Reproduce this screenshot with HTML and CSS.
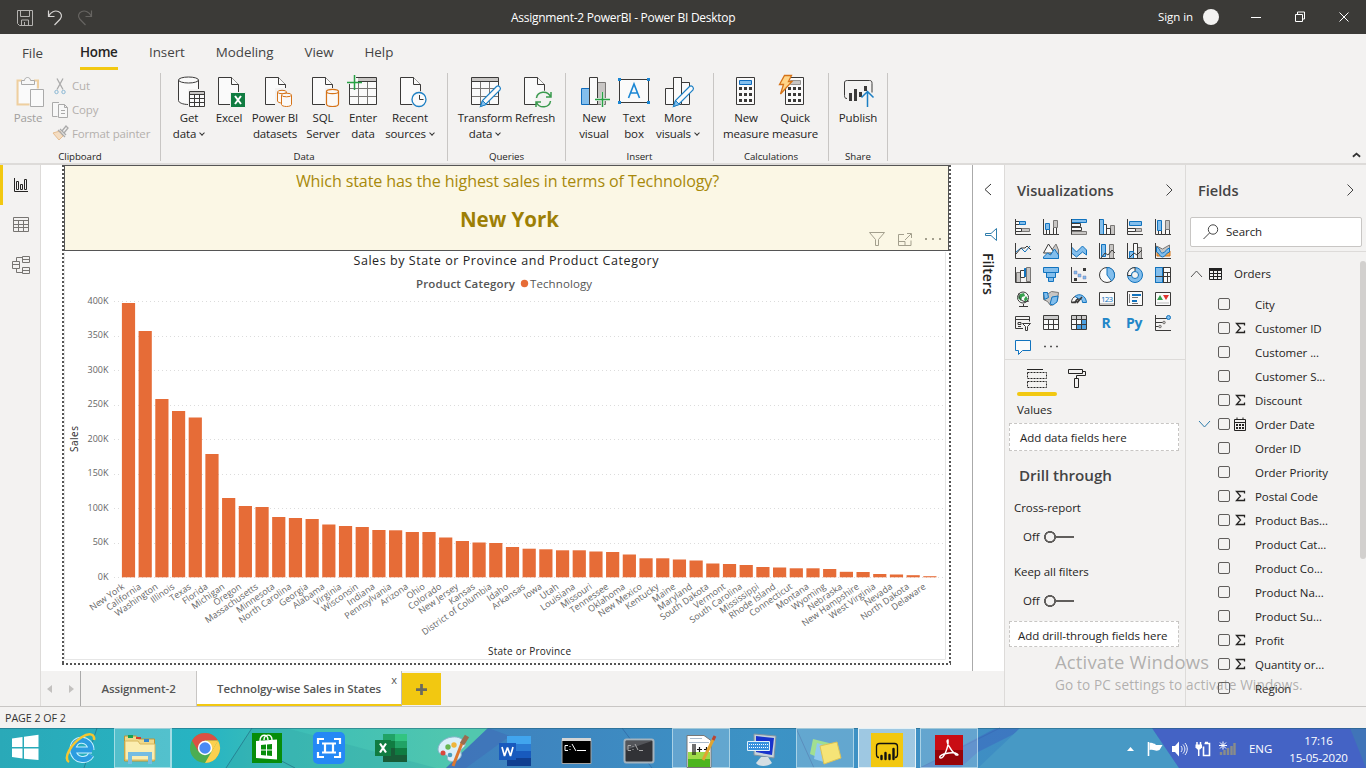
FILE: index.html
```html
<!DOCTYPE html>
<html lang="en">
<head>
<meta charset="utf-8">
<title>Assignment-2 PowerBI - Power BI Desktop</title>
<link rel="stylesheet" href="styles.css">
</head>
<body>
<header class="titlebar">
  <svg class="quick" viewBox="0 0 110 34" fill="none">
    <g stroke="#b5b3b1"><path d="M17.500 10.500h15v15h-13l-2-2zM20.500 10.500v6h9v-6M21.500 25v-5h7v5M24.500 22v3"/></g>
    <path stroke="#d6d4d2" stroke-width="1.200" d="M48.500 10.500v6h6M48.800 16c2-4 6-6 9.500-4.500s4 5 2 7.500L54.500 25"/>
    <path stroke="#666461" stroke-width="1.200" d="M91.500 10.500v6h-6M91.200 16c-2-4-6-6-9.500-4.500s-4 5-2 7.500L85.500 25"/>
  </svg>
  <div class="app-title">Assignment-2 PowerBI - Power BI Desktop</div>
  <div class="account"><span>Sign in</span><i class="avatar"></i></div>
  <svg class="window-btns" viewBox="1240 0 126 34" fill="none" stroke="#fff" stroke-width="1"><path d="M1251 17.500h10M1295.500 14.500h7v7h-7zM1297.500 14v-2h7v7h-2M1339.500 12.500l9 9M1348.500 12.500l-9 9"/></svg>
</header>
<nav class="menu"><span class="m-file">File</span><span class="active">Home</span><span>Insert</span><span>Modeling</span><span>View</span><span>Help</span></nav>
<section class="ribbon">
  <div class="group g-clip">
    <div class="clip">
      <div class="btn off"><svg class="ico" viewBox="12 76 32 32"><g fill="none"><path d="M22 80.500h-4.500v24h12M34 80.500h4v8" stroke="#efcf9f" stroke-width="2"/><path fill="#fafafa" d="M19 82h17v7h-6v14H19z"/><path stroke="#aaa" fill="#f7f7f7" d="M21.500 84.500v-4h3c0-4 6-4 6 0h4v4z"/><path stroke="#aaa" fill="#fafafa" d="M30.500 89.500h13v17h-13z"/></g></svg><span>Paste</span></div>
      <div class="clip-list">
        <div><svg viewBox="52 77 16 16" fill="none" stroke="#aaa"><path d="M57 77.500l6 11M63 77.500l-6 11" stroke-width="1.300"/><circle cx="56.500" cy="91" r="1.700" stroke="#8bb8d5"/><circle cx="63.500" cy="91" r="1.700" stroke="#8bb8d5"/></svg><span>Cut</span></div>
        <div><svg viewBox="52 101 16 16" fill="#f7f7f7" stroke="#aaa"><path d="M59 101.500h-6.500v14h5M58.500 103.500h6l3 3v10h-9zM64.500 103.500v3h3M61 109.500h4M61 112.500h4"/></svg><span>Copy</span></div>
        <div><svg viewBox="52 125 16 16" fill="none" stroke="#aaa"><path d="M53 132l6 7 4-4-3-5z" fill="#f4ddc2" stroke="#e6be91"/><path d="M58 129l7 7M60 128l6 6M62 130l4-5 2 2-4 5" stroke-width="1.300"/></svg><span>Format painter</span></div>
      </div>
    </div>
    <div class="gname">Clipboard</div>
  </div>
  <div class="group g-data">
    <div class="btns">
      <div class="btn"><svg class="ico" viewBox="173 76 32 32"><path class="w" d="M178.500 80v20.500c0 2 4 4 10 4s10-2 10-4V80"/><ellipse class="w" cx="188.500" cy="80" rx="10" ry="3"/><path fill="#f3f2f1" d="M188 89h18v18h-18z"/><path class="w" d="M189.500 91.500h15v15h-15z"/><path fill="#c8c6c4" d="M190 92h14v2h-14z"/><path class="k" d="M189.500 94.500h15M189.500 98.500h15M189.500 102.500h15M194.500 94v12M199.500 94v12"/></svg><span>Get<br>data<i class="dd"></i></span></div>
      <div class="btn"><svg class="ico" viewBox="213 76 32 32"><path class="w" d="M218.500 77.500h13l7 7v20h-20z"/><path class="w" d="M231.500 77.500v7h7"/><path fill="#107c41" stroke="#f3f2f1" d="M230.500 92.500h15v15h-15z"/><path stroke="#fff" stroke-width="2" d="M235 96l6 8M241 96l-6 8"/></svg><span>Excel</span></div>
      <div class="btn"><svg class="ico" viewBox="259 76 32 32"><path class="w" d="M265.500 77.500h13l7 7v20h-20z"/><path class="w" d="M278.500 77.500v7h7"/><path fill="#f3f2f1" d="M275 88h13v20h-13z"/><g fill="#fbf9f7" stroke="#d67318"><path d="M277.500 92v9c0 1 2 2 4.500 2s4.500-1 4.500-2v-9"/><ellipse cx="282" cy="92" rx="4.500" ry="1.700"/><path d="M281.500 95v9.500c0 1 2 2 5 2s5-1 5-2V95"/><ellipse cx="286.500" cy="95" rx="5" ry="1.800"/></g></svg><span>Power BI<br>datasets</span></div>
      <div class="btn"><svg class="ico" viewBox="307 76 32 32"><path class="w" d="M312.500 77.500h13l7 7v20h-20z"/><path class="w" d="M325.500 77.500v7h7"/><path fill="#f3f2f1" d="M325 88h14v20h-14z"/><g fill="#fbf9f7" stroke="#d67318" stroke-width="1.200"><path d="M326.500 91.500v12.500c0 1.500 3 2.500 6 2.500s6-1 6-2.500V91.500"/><ellipse cx="332.500" cy="91.500" rx="6" ry="2.200"/></g></svg><span>SQL<br>Server</span></div>
      <div class="btn"><svg class="ico" viewBox="347 76 32 32"><path class="w" d="M349.500 77.500h27v27h-27z"/><path fill="#c8c6c4" d="M358 78h18v3h-18z"/><path stroke="#797775" fill="none" d="M350 88.500h26M350 96.500h26M358.500 83v21M367.500 81v23"/><path class="k" d="M358 81.500h18"/><path fill="#f3f2f1" d="M346 75h10v9h-10z"/><path stroke="#27a144" stroke-width="1.500" d="M347 82.500h15M354.500 75v15"/></svg><span>Enter<br>data</span></div>
      <div class="btn"><svg class="ico" viewBox="394 76 32 32"><path class="w" d="M400.500 77.500h13l7 7v20h-20z"/><path class="w" d="M413.500 77.500v7h7"/><circle cx="419" cy="99.500" r="8.500" fill="#f3f2f1"/><circle cx="419" cy="99.500" r="7" fill="#fafafa" stroke="#1b7fc4" stroke-width="1.300"/><path class="k" d="M419.500 95v4.500h4"/></svg><span>Recent<br>sources<i class="dd"></i></span></div>
    </div>
    <div class="gname">Data</div>
  </div>
  <div class="group g-query">
    <div class="btns">
      <div class="btn"><svg class="ico" viewBox="469 76 32 32"><path class="w" d="M471.500 77.500h27v27h-27z"/><path fill="#c8c6c4" d="M472 78h26v3h-26z"/><path stroke="#797775" fill="none" d="M472 88.500h26M472 96.500h26M480.500 82v22M489.500 82v22"/><path class="k" d="M472 81.500h26"/><path class="pen" d="M480.500 106.500l2-6 14-14c2-2 5 1 3.500 3.500l-14 14z"/><path fill="#83beec" stroke="#1b7fc4" d="M480.500 106.500l2-6 4 4z"/></svg><span>Transform<br>data<i class="dd"></i></span></div>
      <div class="btn"><svg class="ico" viewBox="519 76 32 32"><path class="w" d="M524.500 77.500h13l7 7v20h-20z"/><path class="w" d="M537.500 77.500v7h7"/><circle cx="543.500" cy="99.500" r="9" fill="#f3f2f1"/><path stroke="#3a9a4e" stroke-width="1.500" fill="none" d="M536.500 98c1-7 11-8 14-1.500M551 92v5h-5M550.500 101c-1 7-11 8-14 1.500M536 107v-5h5"/></svg><span>Refresh</span></div>
    </div>
    <div class="gname">Queries</div>
  </div>
  <div class="group g-insert">
    <div class="btns">
      <div class="btn"><svg class="ico" viewBox="578 76 32 32"><path fill="#83beec" stroke="#0f6cbd" d="M581.500 88.500h8v16h-8z"/><path fill="#c8c6c4" stroke="#797775" d="M597.500 82.500h8v22h-8z"/><path class="w" d="M589.500 77.500h8v27h-8z"/><path stroke="#f3f2f1" stroke-width="3" d="M596 99.500h14M602.500 92v15"/><path stroke="#27a144" stroke-width="1.500" d="M595 99.500h15M602.500 92v15"/></svg><span>New<br>visual</span></div>
      <div class="btn"><svg class="ico" viewBox="618 76 32 32"><path class="w" d="M619.500 79.500h29v23h-29z"/><path fill="#1b87d4" d="M618 78h3v3h-3zM647 78h3v3h-3zM618 101h3v3h-3zM647 101h3v3h-3z"/><path stroke="#1b87d4" stroke-width="1.600" fill="none" d="M628.500 98l5.500-14 5.500 14M630.500 93h7"/></svg><span>Text<br>box</span></div>
      <div class="btn"><svg class="ico" viewBox="663 76 32 32"><path class="w" d="M666.500 88.500h8v16h-8zM682.500 82.500h8v22h-8z"/><path class="w" d="M674.500 77.500h8v27h-8z"/><path class="pen" d="M674.500 106.500l2-6 14-14c2-2 5 1 3.500 3.500l-14 14z"/><path fill="#83beec" stroke="#1b7fc4" d="M674.500 106.500l2-6 4 4z"/></svg><span>More<br>visuals<i class="dd"></i></span></div>
    </div>
    <div class="gname">Insert</div>
  </div>
  <div class="group g-calc">
    <div class="btns">
      <div class="btn"><svg class="ico" viewBox="730 76 32 32"><path class="w" d="M736.500 77.500h18v27h-18z"/><path fill="#83beec" stroke="#0f6cbd" d="M739.500 80.500h12v4h-12z"/><path stroke="#3b3a39" stroke-width="3" stroke-dasharray="3 2" d="M739 88.500h13M739 94.500h13M739 100.500h13"/></svg><span>New<br>measure</span></div>
      <div class="btn"><svg class="ico" viewBox="779 76 32 32"><path class="w" d="M785.500 77.500h18v27h-18z"/><path fill="#c8c6c4" stroke="#979593" d="M790.500 80.500h10v4h-10z"/><path stroke="#3b3a39" stroke-width="3" stroke-dasharray="3 2" d="M788 88.500h13M788 94.500h13M788 100.500h13"/><path fill="#ffd588" stroke="#d67318" stroke-width="1.300" d="M784.500 75.500h7l-3 6h3.500L780.500 94l3-9.500h-4z"/></svg><span>Quick<br>measure</span></div>
    </div>
    <div class="gname">Calculations</div>
  </div>
  <div class="group g-share">
    <div class="btns">
      <div class="btn"><svg class="ico" viewBox="842 76 32 32"><path class="k" d="M847 98.500c-2 0-2.500-1-2.500-3V83c0-2 1-2.500 3-2.500h22c2 0 2.500 1 2.500 3v9"/><path stroke="#3b3a39" stroke-width="3" d="M850.500 93v8M855.500 89v12M860.500 92v5M865.500 86v5"/><path stroke="#1b7fc4" stroke-width="1.500" fill="none" d="M867.500 107V91.500M861.500 97.500l6-6 6 6"/></svg><span>Publish</span></div>
    </div>
    <div class="gname">Share</div>
  </div>
  <svg class="collapse" viewBox="0 0 10 6"><path d="M1 5l4-3.500L9 5" fill="none" stroke="#333" stroke-width="2"/></svg>
</section>
<main class="work">
  <aside class="rail">
    <svg viewBox="0 165 40 120" fill="none" stroke="#252423"><path d="M14.500 178v13.500H28M16.500 181.500h2v8h-2zM20.500 184.500h2v5h-2zM24.500 179.500h2v10h-2z"/><g stroke="#777572"><path d="M13.500 217.500h15v14h-15zM13 220.500h16M13 224.500h16M13 227.500h16M18.500 220v12M23.500 220v12"/><path d="M12.500 261.500h7v7h-7zM12.500 264.500h7M22.500 256.500h7v6h-7zM22.500 259.500h7M22.500 267.500h7v6h-7zM22.500 270.500h7M16.500 261v-3.500h6M16.500 269v3.500h6"/></g></svg>
  </aside>
  <div class="center">
    <div class="stage">
      <div class="canvas">
        <div class="page">
          <div class="card">
            <div class="question">Which state has the highest sales in terms of Technology?</div>
            <div class="answer">New York</div>
            <svg class="card-tools" viewBox="868 231 74 16" fill="none" stroke="#a39f8d"><path d="M869.500 232.500h15l-6 7v6h-3v-6zM904 234.500h-5.500v11h12.500v-5M899 241.500h6v4M905 240l6-6M907 233.500h4.500v4.500"/><path stroke-width="2" d="M925 239h2M932 239h2M939 239h2"/></svg>
          </div>
          <svg class="chart" id="chart" viewBox="64 251 885 411"></svg>
        </div>
      </div>
      <aside class="filters">
        <svg viewBox="973 165 31 80" fill="none" stroke="#333"><path d="M991 184l-6 5.500 6 5.500"/><path stroke="#2f7dab" d="M996.500 228.500v12l-5.500-5h-5.500v-2h5.500z"/></svg>
        <div class="vtext">Filters</div>
      </aside>
    </div>
    <div class="pagetabs">
      <div class="arrows"><i class="l"></i><i class="r"></i></div>
      <div class="tab">Assignment-2</div>
      <div class="tab on">Technolgy-wise Sales in States<b>x</b></div>
      <div class="add"><svg viewBox="0 0 12 12"><path d="M6 0v12M0 6h12" stroke="#6b6a5e" stroke-width="3"/></svg></div>
    </div>
  </div>
  <aside class="viz">
    <div class="phead"><span>Visualizations</span><svg viewBox="0 0 8 12"><path d="M1.500 .5L7 6l-5.500 5.500" fill="none" stroke="#444"/></svg></div>
    <div class="vgrid">
      <svg viewBox="0 0 16 16"><path class="k" d="M.5 0v15.500H16"/><path class="g" d="M6.500 9.500h8v3h-8z"/><path class="w" d="M.5 9.500h6v3h-6zM.5 2.500h4v3h-4z"/><path class="b" d="M4.500 2.500h6v3h-6z"/></svg>
      <svg viewBox="0 0 16 16"><path class="k" d="M.5 0v15.500H16"/><path class="w" d="M3.500 10.500h3v5h-3zM10.500 8.500h3v7h-3z"/><path class="b" d="M2.500 4.500h4v6h-4z"/><path class="g" d="M10.500 1.500h4v7h-4z"/></svg>
      <svg viewBox="0 0 16 16"><path class="g" d="M.5 12.500h15v3H.5z"/><path class="w" d="M.5 4.500h9v3h-9zM.5 8.500h10v3H.5z"/><path class="b" d="M.5 .5h15v3H.5z"/><path class="k" d="M.5 0v15.500"/></svg>
      <svg viewBox="0 0 16 16"><path class="g" d="M11.500 6.500h4v9h-4z"/><path class="w" d="M4.500 5.500h3v10h-3zM7.500 9.500h4v6h-4z"/><path class="b" d="M.5 .5h4v15h-4z"/><path class="k" d="M.5 0v15.500H16"/></svg>
      <svg viewBox="0 0 16 16"><path class="k" d="M.5 0v15.500H16"/><path class="g" d="M8.500 9.500h6v3h-6z"/><path class="w" d="M.5 9.500h8v3h-8z"/><path class="b" d="M2.500 2.500h12v4h-12z"/></svg>
      <svg viewBox="0 0 16 16"><path class="k" d="M.5 0v15.500H16"/><path class="w" d="M3.500 10.500h3v5h-3zM10.500 8.500h4v7h-4z"/><path class="b" d="M2.500 1.500h4v10h-4z"/><path class="g" d="M10.500 1.500h4v9h-4z"/></svg>

      <svg viewBox="0 0 16 16"><path class="k" d="M.5 0v15.500H16"/><path fill="none" stroke="#1173be" d="M1 9l5-4 4 4 5-6"/><path class="k" d="M1 11l5-6 4 0 2-2 4 4" /></svg>
      <svg viewBox="0 0 16 16"><path class="g" d="M8 8l5-7 2.500 6v8.500H8z"/><path class="w" d="M.5 10l5-9 6 9z"/><path class="b" d="M.5 15.500V14l4-4 3 2 4-6 4 6v3.500z"/></svg>
      <svg viewBox="0 0 16 16"><path class="b" d="M.5 4l5 5 6-6 4 4v5l-4-3-6 5-5-4z"/><path class="k" d="M.5 0v15.500H16"/></svg>
      <svg viewBox="0 0 16 16"><path class="g" d="M10.500 1.500h4v14h-4z"/><path class="b" d="M2.500 1.500h4v12h-4z"/><path class="k" d="M.5 0v15.500H16M2 15l4-5 3 2 4-5 3 3"/></svg>
      <svg viewBox="0 0 16 16"><path class="g" d="M10.500 4.500h4v11h-4z"/><path class="w" d="M6.500 .5h4v15h-4z"/><path class="b" d="M2.500 8.500h4v7h-4z"/><path class="k" d="M.5 0v15.500H16M3 14l4-4 3 2 5-5"/></svg>
      <svg viewBox="0 0 16 16"><path fill="#f2a84d" stroke="#d67318" d="M2 8h13v5H2z"/><path class="g" d="M1.500 3l6 3 7-4v4l-7 5-6-3z"/><path class="b" d="M1.500 4c4 1 3 6 6 6s3-4 7-5v4c-4 1-4 5-7 5s-3-4-6-5z"/><path class="k" d="M.5 0v15.500H16"/></svg>

      <svg viewBox="0 0 16 16"><path class="g" d="M1.500 5.500h4v10h-4z"/><path class="w" d="M5.500 3.500h4v7h-4z"/><path fill="#1173be" stroke="#1173be" d="M9.500 1.500h2v8h-2z"/><path class="g" d="M11.500 .5h4v14h-4z"/><path class="k" d="M.5 0v15.500H16"/></svg>
      <svg viewBox="0 0 16 16"><path class="b" d="M.5 .5h15v5H.5zM3.500 5.500h9v5h-9zM5.500 10.500h5v4h-5z"/></svg>
      <svg viewBox="0 0 16 16"><path class="k" d="M.5 0v15.500H16"/><path fill="#83beec" stroke="#66a" stroke-width=".4" d="M3 4h3v3H3zM7 7h3v3H7zM12 9h3v3h-3z"/><path fill="#3b3a39" d="M12 1h3v3h-3zM3 11h3v3H3z"/></svg>
      <svg viewBox="0 0 16 16"><circle class="w" cx="8" cy="8" r="7.500"/><path class="b" d="M8 .5A7.500 7.500 0 0 1 12.500 14L8 8z"/></svg>
      <svg viewBox="0 0 16 16"><circle class="b" cx="8" cy="8" r="7.500"/><path class="w" d="M8 .5v4a4 4 0 0 0-3.500 4h-4a7.500 7.500 0 0 1 7.500-8z"/><circle fill="#f3f2f1" stroke="#1173be" cx="8" cy="8" r="3.500"/></svg>
      <svg viewBox="0 0 16 16"><path class="w" d="M.5 .5h15v15H.5z"/><path class="b" d="M.5 .5h7v15h-7z"/><path class="k" d="M.5 9.500h15M8.500 .5v15M8 5.500h7M12.500 5.500v10"/></svg>

      <svg viewBox="0 0 16 16"><circle class="w" cx="8" cy="6.500" r="5.500"/><path fill="#36a04d" d="M5 3l4-1 1 3-3 1-1 4-3-3zM11 5l2 3-3 3-1-3z"/><path class="k" d="M4 2a7 7 0 0 0 10 8M8.500 13v2M4 15.500h9"/></svg>
      <svg viewBox="0 0 16 16"><path class="g" d="M.5 1.500l5 1 3-2 7 1-1 8-4 4-3 1-3-4-4-2z"/><path class="b" d="M.5 1.500h4l1 5-4 2zM9 6l6-1-1 6-4 3-3-1z"/></svg>
      <svg viewBox="0 0 16 16"><path class="w" d="M.5 11.500A7 7 0 0 1 5 5l3 5z"/><path class="b" d="M4 5.500c4-4 11-1 11.500 6h-4c0-3-2-4-4-4z"/><path class="k" d="M.5 11.500h4c0-2 1-3 3-3.500M6 12l5-6" stroke-width="1.500"/></svg>
      <svg viewBox="0 0 16 16"><path class="w" d="M.5 1.500h15v13H.5z"/><path fill="#c8c6c4" d="M1 12h14v2H1z"/><text x="2" y="11" font-size="8" fill="#1173be" textLength="12">123</text></svg>
      <svg viewBox="0 0 16 16"><path class="w" d="M.5 .5h15v14H.5z"/><path stroke="#1173be" stroke-width="2" d="M5 4h9M5 10h5"/><path class="k" d="M2.500 3v9M5 6.500h6M5 12.500h6" stroke-width=".7"/></svg>
      <svg viewBox="0 0 16 16"><path class="w" d="M.5 1.500h15v13H.5z"/><path fill="#36a04d" d="M2 9l3-5 3 5z"/><path fill="#e0352f" d="M8 4h6l-3 5z"/><path stroke="#bbb" d="M2 12h12"/></svg>

      <svg viewBox="0 0 16 16"><path class="k" d="M8 13.500H.5v-12h14v5M.5 4.500h14M3 7.500h3v2H3zM3 11.500h3"/><path class="w" d="M7.500 8.500h8l-3 3v4h-2v-4z"/></svg>
      <svg viewBox="0 0 16 16"><path class="w" d="M.5 .5h15v14H.5z"/><path fill="#ccc" d="M1 1h14v3H1z"/><path class="k" d="M.5 4.500h15M.5 9.500h15M5.500 4v10M10.500 4v10"/></svg>
      <svg viewBox="0 0 16 16"><path class="w" d="M.5 .5h15v14H.5z"/><path fill="#ccc" d="M1 1h14v3H1z"/><path fill="#4a9fe0" d="M10 4h5v10h-5zM5 9h5v5H5z"/><path class="k" d="M.5 4.500h15M.5 9.500h15M5.500 1v13M10.500 1v13"/></svg>
      <div class="rp">R</div>
      <div class="rp">Py</div>
      <svg viewBox="0 0 16 16"><path class="k" d="M.5 0v15.500H16M0 3.500h12M0 7.500h8M0 11.500h4"/><circle class="b" cx="13.500" cy="2.500" r="2"/><circle class="g" cx="9" cy="7.500" r="1.300"/><circle class="g" cx="5" cy="11.500" r="1.300"/></svg>

      <svg viewBox="0 0 16 16"><path fill="#fafafa" stroke="#1173be" d="M.5 1.500h15v10h-8l-4 4v-4h-3z"/></svg>
      <svg viewBox="0 0 16 16"><path stroke="#555" stroke-width="1.600" d="M1 7.500h2M7 7.500h2M13 7.500h2"/></svg>
    </div>
    <div class="vtabs"><svg viewBox="1017 365 80 25" fill="none" stroke="#252423"><path d="M1027 368.500h16"/><path stroke-dasharray="2 1" d="M1027.500 371.500h19v6h-19zM1027.500 380.500h19v6h-19z"/><path d="M1068.500 368.500h14v4h-14zM1083 370.500h2.500v4h-9v3M1074.500 377.500h4v9h-4z"/></svg><i></i></div>
    <div class="values">Values</div>
    <div class="drop">Add data fields here</div>
    <h2>Drill through</h2>
    <div class="opt">Cross-report</div>
    <div class="toggle">Off<i></i></div>
    <div class="opt o2">Keep all filters</div>
    <div class="toggle">Off<i></i></div>
    <div class="drop d2">Add drill-through fields here</div>
  </aside>
  <aside class="fields">
    <div class="phead"><span>Fields</span><svg viewBox="0 0 8 12"><path d="M1.500 .5L7 6l-5.500 5.500" fill="none" stroke="#444"/></svg></div>
    <div class="search"><svg viewBox="0 0 16 16" fill="none" stroke="#444"><circle cx="10" cy="5.500" r="4.700"/><path d="M6.500 9L.5 15"/></svg>Search</div>
    <div class="flist">
      <div class="orders"><svg viewBox="0 0 34 14" fill="none"><path d="M1 10l5.500-6L12 10" stroke="#555"/><path stroke="#222" d="M19.500 1.500h12v11h-12zM19 6.500h13M19 9.500h13M23.500 3v10M27.500 3v10"/><path stroke="#222" stroke-width="3" d="M19 2.500h13"/></svg>Orders</div>
      <div id="fieldrows"></div>
      <i class="scroll"></i>
    </div>
  </aside>
  <div class="watermark"><p class="wm1">Activate Windows</p><p class="wm2">Go to PC settings to activate Windows.</p></div>
</main>
<div class="status">PAGE 2 OF 2</div>
<footer class="taskbar">
  <svg class="wall" viewBox="0 728 1366 40" preserveAspectRatio="none">
    <defs><linearGradient id="wg"><stop offset="0" stop-color="#2aa9b8"/><stop offset=".15" stop-color="#27b4c3"/><stop offset=".2" stop-color="#3abdb8"/><stop offset=".34" stop-color="#52c7ae"/></linearGradient><linearGradient id="wb"><stop offset="0" stop-color="#3f80bd"/><stop offset=".35" stop-color="#3c93c5"/><stop offset="1" stop-color="#4385c0"/></linearGradient></defs>
    <path fill="url(#wg)" d="M0 728h1366v40H0z"/><path fill="#35a5a6" d="M252 728h34l150 40H226z" opacity=".35"/>
    <path fill="url(#wb)" d="M488 728h878v40H446z"/><path fill="#3f69b5" d="M488 728l-42 40h20l44-32z" opacity=".5"/>
    <path fill="none" stroke="#236f84" opacity=".7" d="M97 728L84 768M252 728l-26 40M270 755l25 13"/>
    <path fill="none" stroke="#2d5e9c" opacity=".6" d="M622 728l30 40M796 728l18 40M1000 728l-80 40"/>
    <path fill="#3c6bc0" d="M978 752l48-24h-30l-76 40h40z" opacity=".6"/>
    <path fill="#4799c5" d="M1020 728h132l27 40H978z"/><path fill="#4463c5" d="M1152 728h214v40h-187z"/><path fill="#4074b8" d="M1350 728h16v40z"/>
    <path fill="#1f5f77" opacity=".5" d="M0 728h1366v1H0z"/>
  </svg>
  <div class="start"><svg viewBox="11 735 28 26" fill="#fff"><path d="M12 738.500l10.500-1.500v10H12zM24 736.800l14.500-2v12.200H24zM12 748.500h10.500v10L12 757zM24 748.500h14.500V760L24 758.700z"/></svg></div>
  <div class="apps">
    <div><svg viewBox="65 732 32 32"><path fill="none" stroke="#c4f0ff" stroke-width="7" d="M92 750H73c0-14 18-12 18 0M91 755c-4 7-16 6-18-4"/><path fill="none" stroke="#2b9ce0" stroke-width="5" d="M92 750H73c0-14 18-12 18 0M91 755c-4 7-16 6-18-4"/><path fill="none" stroke="#f5c731" stroke-width="2.500" d="M69 762c-6-4 2-18 13-25 6-4 13-4 12 3"/></svg></div>
    <div class="open stack"><svg viewBox="124 732 32 32"><path fill="#eed88b" stroke="#b99537" d="M124.500 736h12l2 3h16v22h-30z"/><path fill="#15a052" d="M128 735h5v3h-5z"/><path fill="#d43c2c" d="M136 737h5v2h-5z"/><path fill="#3285cc" d="M144 739h5v3h-5z"/><path fill="#fbedb0" stroke="#d8b85d" d="M125 741h13l2 3h15v16h-30z"/><path fill="none" stroke="#75bce2" stroke-width="4" d="M130 764v-10h20v10"/></svg></div>
    <div><svg viewBox="189 732 32 32"><circle cx="205" cy="748" r="15" fill="#4cad51"/><path fill="#dc5044" d="M192 740.500a15 15 0 0 1 26 0h-13l-6.500 11.200z"/><path fill="#fcd04f" d="M218 740.500a15 15 0 0 1-13 22.500l6.500-11.200z"/><path fill="#fcd04f" d="M205 740.500h13.100l-6.600 11.500z"/><circle cx="205" cy="748" r="7.200" fill="#fff"/><circle cx="205" cy="748" r="5.700" fill="#4a8af4"/></svg></div>
    <div><svg viewBox="251 732 32 32"><path fill="#078d0a" d="M252 733h30v30h-30z"/><path fill="#fff" d="M256 741l21-1.500v20L256 758z"/><path fill="none" stroke="#fff" stroke-width="1.400" d="M260 741c0-7 8-8 8-1M264 740c0-6 8-7 8 0"/><path fill="#078d0a" d="M261 745l5-.500v5h-5zM267 744.400l5-.500v5.600h-5zM261 750.500h5v5l-5-.500zM267 750.500h5v5.500l-5-.400z"/></svg></div>
    <div><svg viewBox="313 732 32 32"><rect x="313" y="732" width="32" height="32" rx="5" fill="#2588f5"/><path fill="none" stroke="#fff" stroke-width="2.200" d="M318 744v-5h6M334 739h6v5M340 752v5h-6M324 757h-6v-5M322 743.500h14M322 752.500h14M325 743v10M333 743v10"/></svg></div>
    <div><svg viewBox="375 732 32 32"><path fill="#21a366" d="M383 734h24v28h-24z"/><path fill="#107c41" d="M383 741h12v7h-12z"/><path fill="#33c481" d="M395 734h12v7h-12z"/><path fill="#185c37" d="M383 748h12v7h12v7h-24z"/><path fill="#107c41" d="M395 748h12v7h-12zM375 740h16v16h-16z"/><path stroke="#fff" stroke-width="2.200" d="M380 743.500l6 9M386 743.500l-6 9"/></svg></div>
    <div><svg viewBox="437 732 32 32"><path fill="#d9effa" stroke="#8bb4cc" d="M438 749c1-12 22-17 27-6 2 5-6 5-4 10s-6 10-12 8c-3-2 0-5-3-6s-8 0-8-6z"/><circle cx="443" cy="753" r="2.500" fill="#d8493d"/><circle cx="448" cy="747" r="2.700" fill="#66b653"/><circle cx="454" cy="745" r="2.700" fill="#eeb53c"/><circle cx="450" cy="755" r="2.300" fill="#4b9ebd"/><path stroke="#dc7730" stroke-width="3" d="M453 766l9-23"/><path stroke="#9b6c4f" stroke-width="5" d="M462 744l5-8"/></svg></div>
    <div><svg viewBox="499 732 32 32"><path fill="#41a5ee" d="M507 736h24v8h-24z"/><path fill="#2b7cd3" d="M507 744h24v7h-24z"/><path fill="#185abd" d="M507 751h24v7h-24z"/><path fill="#103f91" d="M507 758h24v8h-24z"/><path fill="#185abd" d="M499 743h17v17h-17z"/><path fill="none" stroke="#fff" stroke-width="1.700" stroke-linejoin="bevel" d="M502 747l2.500 9 3-8.500 3 8.500 2.500-9"/></svg></div>
    <div><svg viewBox="561 732 32 32"><path fill="#000" stroke="#a5a5a5" d="M562 739.500h29v24h-29z"/><path fill="#d5d5d5" d="M562 738h29v3h-29z"/><path stroke="#fff" fill="none" d="M568 745.500h-3v5h3M570 746v1M570 749v1M572 744l4 7M577 750.500h9"/></svg></div>
    <div><svg viewBox="623 732 32 32"><rect x="624.500" y="739.500" width="29" height="23" rx="2" fill="#313236" stroke="#a4b2bc" stroke-width="2"/><path fill="#53555a" d="M626 741h26l-26 9z"/><path stroke="#aaa" fill="none" d="M631 745.500h-3v5h3M633 746v1M633 749v1M635 744l3 6M639 750.500h4"/></svg></div>
    <div class="open"><svg viewBox="685 732 32 32"><path fill="#fff" stroke="#777" d="M687 735.500h17l7 5v27h-24z"/><path fill="#9fdb49" d="M688 752h22v8h-22z"/><path fill="#4db51f" d="M688 759h22v8h-22z"/><path stroke="#aabacb" d="M690 738.500h12M689 742.500h20"/><path stroke="#111" stroke-width="1.200" fill="none" d="M693 744v11M695 744v11M697 749.500h5M699.500 747v5M704 749.500h5M706.500 747v5"/><path stroke="#e1a431" stroke-width="3" d="M703 760l11-22"/><path stroke="#b84436" stroke-width="3" d="M713 740l2-4"/></svg></div>
    <div><svg viewBox="747 732 32 32"><path fill="#c5d2da" stroke="#8293a0" d="M754 734l22 2-2 22-20-3z"/><path fill="#1733cc" d="M756 736l18 2-2 17-16-3z"/><path fill="#3891de" stroke="#e0f1fa" d="M747.500 741.500h22v9h-22z"/><path stroke="#fff" stroke-dasharray="1 1" d="M749 744.500h19M749 747.500h19"/><path fill="#d5dee3" d="M761 757h7l4 6c-4 4-14 4-16 0z"/></svg></div>
    <div class="open"><svg viewBox="809 732 32 32"><path fill="#a1df91" d="M813 739l16 4-5 17-14-6z"/><path fill="#91caf0" d="M817 743l13 4-3 16-13-4z"/><path fill="#f5e477" stroke="#dbc256" d="M820 746l17-4 4 16-17 6z"/></svg></div>
    <div class="open cur"><svg viewBox="871 732 32 32"><path fill="#f2c811" d="M871 733h32v34h-32z"/><path fill="none" stroke="#111" stroke-width="1.300" d="M879 757.500c-2 0-2.500-1-2.500-3v-8c0-2 1-3 3-3h15c2 0 3 1 3 3v8c0 2-1 3-2.500 3"/><path stroke="#111" stroke-width="2.400" stroke-linecap="round" d="M881.500 756v3M885.500 753v6M889.500 755v4M893.500 749v10"/></svg></div>
    <div class="open"><svg viewBox="933 732 32 32"><path fill="#c90d14" d="M935 735h28v15h-28z"/><path fill="#970309" d="M935 750h28v15h-28z"/><path fill="none" stroke="#fff" stroke-width="1.400" d="M948 740c-3 0 2 10 8 15 4 1 2-3-7-2s-11 5-8 5 8-12 7-18z"/></svg></div>
  </div>
  <svg class="tray" viewBox="1120 728 120 40" fill="none" stroke="#fff"><path fill="#fff" stroke="none" d="M1127 751l3.500-4 3.500 4z"/><path d="M1148.500 742v14" stroke-width="1.600"/><path fill="#fff" stroke="none" d="M1149.500 743c3-1 4 1 6 1v1h7l-3 5c-5 2-4-1-10 0z"/><path fill="#fff" stroke="none" d="M1172 746h3l4-4.500v15l-4-4.500h-3z"/><path d="M1181 746c1.500 2 1.500 4 0 6M1183 744.500c2.500 3 2.500 6 0 9M1185 743c3 4 3 8 0 12" stroke-width=".9"/><path d="M1204.500 743.500h5v12h-6v-9M1205 742.500h3" stroke-width="1.600"/><path d="M1197 742v3M1200.500 742v3M1198.700 748v8" stroke-width="1.500"/><path fill="#fff" stroke="none" d="M1195.500 744.500h6.500v3l-2 2h-2.500l-2-2z"/><g stroke="#8a8d88" stroke-width="2.400"><path d="M1221 755v-3M1224.500 755v-5M1228 755v-7M1231.500 755v-9M1234.500 755v-12" /></g><path d="M1223 741.500v8M1219 745.500h8M1220 742.500l6 6M1226 742.500l-6 6" /></svg>
  <span class="lang">ENG</span>
  <div class="clock">17:16<br>15-05-2020</div>
</footer>
<script src="app.js"></script>
</body>
</html>
```
FILE: styles.css
```css
* { box-sizing: border-box; }
body { margin: 0; width: 1366px; height: 768px; overflow: hidden; display: flex; flex-direction: column; background: #f3f2f1; color: #252423; font: 11.5px/16px "Open Sans", "Noto Sans", sans-serif; letter-spacing: -.05px; }
svg { display: block; overflow: visible; }
i { font-style: normal; }
.k { fill: none; stroke: #3b3a39; }
.w { fill: #fafafa; stroke: #3b3a39; }
.b { fill: #83beec; stroke: #1173be; }
.g { fill: #c8c6c4; stroke: #797775; }
.pen { fill: #fafafa; stroke: #1b7fc4; stroke-width: 1.2; }

.titlebar { height: 34px; background: #3b3a37; color: #fff; display: flex; align-items: center; flex: none; }
.quick { width: 110px; height: 34px; }
.app-title { flex: 1; padding: 1px 0 0 401px; white-space: nowrap; font-size: 12px; letter-spacing: -.27px; }
.account { display: flex; align-items: center; gap: 10px; margin-right: 21px; white-space: nowrap; }
.avatar { width: 16px; height: 16px; border-radius: 50%; background: #f3f2f1; }
.window-btns { width: 126px; height: 34px; }

.menu { height: 36px; flex: none; display: flex; padding: 4px 0 0 22px; font-size: 13.4px; line-height: 29px; color: #444; gap: 31px; }
.menu span { height: 32px; white-space: nowrap; }
.menu .m-file { padding-top: 1px; margin-right: 6px; }
.menu .active { width: 38px; font-weight: 600; letter-spacing: -.3px; color: #252423; border-bottom: 3px solid #f2c811; }

.ribbon { position: relative; height: 95px; flex: none; display: flex; padding-top: 3px; border-bottom: 2px solid #dddbd9; }
.group { height: 88px; border-right: 1px solid #c8c6c4; display: flex; flex-direction: column; justify-content: space-between; }
.btns { display: grid; padding-top: 3px; }
.btn { display: flex; flex-direction: column; align-items: center; white-space: nowrap; text-align: center; letter-spacing: -.15px; }
.btn span { margin-top: 2px; }
.off { color: #a19f9d; }
.ico { width: 32px; height: 32px; flex: none; }
.dd { display: inline-block; width: 4px; height: 4px; border: solid #333; border-width: 0 1.5px 1.5px 0; transform: rotate(45deg); margin: 0 1px 3px 4px; }
.gname { text-align: center; font-size: 9.7px; line-height: 12px; margin-bottom: -2px; }
.g-clip { width: 161px; }
.g-data { width: 287px; } .g-data .btns { grid-template-columns: 48px 32px 60px 36px 44px 50px; padding-left: 4px; }
.g-query { width: 118px; } .g-query .btns { grid-template-columns: 74px 26px; }
.g-insert { width: 148px; } .g-insert .btns { grid-template-columns: 40px 40px 48px; padding-left: 8px; }
.g-calc { width: 115px; } .g-calc .btns { grid-template-columns: 48px 50px; padding-left: 8px; }
.g-share { width: 59px; }
.clip { display: flex; padding: 3px 0 0 12px; gap: 8px; }
.clip-list { color: #b3b0ad; letter-spacing: -.15px; margin-top: -2px; }
.clip-list div { display: flex; gap: 4px; height: 24px; align-items: center; white-space: nowrap; }
.clip-list svg { width: 16px; height: 16px; }
.collapse { position: absolute; right: 5px; bottom: 5px; width: 9px; height: 6px; }

.work { position: relative; height: 541px; flex: none; display: flex; }
.rail { width: 41px; border-right: 1px solid #dddbd9; background: linear-gradient(#f2c811, #f2c811) 0 0 / 3px 40px no-repeat #f3f2f1; }
.rail svg { width: 40px; height: 120px; }
.center { width: 963px; display: flex; flex-direction: column; }
.stage { height: 506px; display: flex; background: #fff; }
.canvas { width: 931px; padding-left: 21px; }
.page { width: 889px; height: 500px; padding: 0 2px 2px; background:
  repeating-linear-gradient(#555 0 2px, transparent 2px 4px) 0 0 / 2px 100% no-repeat,
  repeating-linear-gradient(#555 0 2px, transparent 2px 4px) 100% 0 / 2px 100% no-repeat,
  repeating-linear-gradient(90deg, #555 0 2px, transparent 2px 4px) 0 100% / 100% 2px no-repeat; }
.card { width: 885px; height: 86px; border: 1px solid #555; background: #fbf7e5; color: #a8890a; text-align: center; position: relative; }
.question { font-size: 16.1px; line-height: 20px; margin-top: 5px; padding-left: 2px; letter-spacing: -.12px; }
.answer { font-size: 20.5px; font-weight: 700; line-height: 28px; margin-top: 14px; padding-left: 6px; color: #9d7f05; letter-spacing: 0; }
.card-tools { position: absolute; right: 6px; bottom: 3px; width: 74px; height: 16px; }
.chart { width: 885px; height: 411px; letter-spacing: 0; }
.ax { font-size: 9px; fill: #666; }
.filters { width: 32px; border-left: 1px solid #aaa; }
.filters svg { width: 31px; height: 80px; }
.vtext { writing-mode: vertical-rl; font-size: 14px; font-weight: 600; letter-spacing: 0; margin: 8px 0 0 8px; line-height: 15px; }
.pagetabs { height: 35px; display: flex; color: #555; font-weight: 600; }
.arrows { width: 40px; border-right: 1px solid #aaa; display: flex; align-items: center; justify-content: center; gap: 17px; }
.arrows i { border: 4px solid transparent; }
.arrows .l { border-left: 0; border-right-color: #c3c1bf; border-right-width: 5px; }
.arrows .r { border-right: 0; border-left-color: #c3c1bf; border-left-width: 5px; }
.tab { position: relative; width: 116px; border-right: 1px solid #c8c6c4; text-align: center; line-height: 36px; white-space: nowrap; letter-spacing: -.1px; }
.tab.on { width: 205px; background: #fff; border-bottom: 2px solid #f2c811; border-right: 1px solid #bbb; }
.tab b { position: absolute; right: 4px; top: 1px; font-weight: 400; font-size: 11px; line-height: 16px; }
.add { width: 39px; height: 32px; margin-top: 2px; background: #f2c811; display: grid; place-items: center; }
.add svg { width: 11px; height: 11px; }

.viz { width: 181px; border-left: 1px solid #dddbd9; }
.fields { width: 181px; border-left: 1px solid #dddbd9; }
.phead { height: 49px; padding: 0 12px; display: flex; align-items: center; justify-content: space-between; font-size: 14.6px; letter-spacing: 0; font-weight: 600; color: #444; }
.phead svg { width: 8px; height: 12px; }
.vgrid { display: grid; grid-template-columns: repeat(6, 16px); grid-auto-rows: 16px; gap: 8px 12px; padding: 5px 0 0 10px; height: 145px; }
.vgrid svg { width: 16px; height: 16px; }
.rp { font-size: 14px; font-weight: 700; color: #2286c8; letter-spacing: -.3px; white-space: nowrap; display: flex; justify-content: center; margin-left: -2px; }
.vtabs { border-top: 1px solid #dddbd9; height: 36px; padding: 6px 0 0 12px; }
.vtabs svg { width: 80px; height: 25px; }
.vtabs i { display: block; width: 40px; height: 4px; border-radius: 2px; background: #f2c811; margin-top: 1px; }
.values { padding: 7px 0 0 12px; }
.drop { margin: 5px 0 0 4px; width: 170px; height: 28px; border: 1px dashed #c8c6c4; background: #fff; padding-left: 10px; line-height: 28px; white-space: nowrap; }
.viz h2 { margin: 14px 0 0 14px; font-size: 15.2px; line-height: 20px; font-weight: 600; color: #444; }
.opt { margin: 15px 0 0 9px; }
.o2 { margin-top: 19px; }
.toggle { margin: 13px 0 0 18px; display: flex; align-items: center; height: 16px; }
.toggle i { margin-left: 4px; width: 30px; height: 12px; background: radial-gradient(circle at 6px 6px, #f3f2f1 4px, #605e5c 4.5px 5.7px, transparent 6.2px), linear-gradient(#605e5c, #605e5c) 12px 5px / 18px 2px no-repeat; }
.drop.d2 { margin-top: 12px; height: 26px; line-height: 27px; padding-left: 8px; }

.search { margin: 3px 4px 0; width: 172px; height: 30px; border: 1px solid #c8c6c4; border-radius: 2px; background: #fff; display: flex; align-items: center; gap: 7px; padding-left: 12px; }
.search svg { width: 16px; height: 16px; }
.flist { margin-top: 4px; border-top: 1px solid #dddbd9; position: relative; padding-top: 9px; }
.orders { display: flex; height: 26px; align-items: center; gap: 10px; padding-left: 4px; margin-bottom: 5px; }
.orders svg { width: 34px; height: 14px; }
.row { display: grid; grid-template-columns: 14px 12px 13px 1fr; column-gap: 6px; height: 24px; align-items: center; padding-left: 12px; white-space: nowrap; }
.row span:last-child { padding-top: 1px; }
.row .cb { width: 12px; height: 12px; border: 1px solid #605e5c; border-radius: 2px; }
.row svg { width: 14px; height: 14px; margin-left: -3px; }
.row span:first-child svg { margin-left: 1px; }
.scroll { position: absolute; right: 0; top: 9px; width: 6px; height: 298px; border-radius: 3px; background: #d2d0ce; }
.watermark { position: absolute; left: 1055px; top: 486px; color: rgba(120,118,116,.55); white-space: nowrap; pointer-events: none; }
.watermark p { margin: 0; }
.wm1 { font-size: 18.5px; line-height: 22px; letter-spacing: .15px; }
.wm2 { font-size: 13.6px; line-height: 20px; padding-top: 2px; letter-spacing: .15px; }

.status { height: 22px; flex: none; border-top: 1px solid #c8c6c4; padding-left: 5px; line-height: 22px; font-size: 10.7px; color: #333; }
.taskbar { height: 40px; flex: none; display: flex; position: relative; color: #fff; }
.wall { position: absolute; inset: 0; width: 1366px; height: 40px; }
.taskbar > *:not(.wall) { position: relative; }
.start { width: 52px; padding: 7px 0 0 11px; }
.start svg { width: 28px; height: 26px; }
.apps { display: flex; gap: 4px; width: 1068px; }
.apps div { width: 58px; height: 40px; padding: 4px 0 0 13px; }
.apps svg { width: 32px; height: 32px; }
.apps .open { border: 1px solid rgba(225,245,250,.55); background: rgba(255,255,255,.2); padding: 3px 0 0 12px; }
.apps .stack { padding-left: 9px; box-shadow: inset -4px 0 0 -3px #a3dbe4; }
.apps .cur { background: rgba(255,255,255,.5); border-color: #e4f1f6; }
.tray { width: 120px; height: 40px; }
.lang { width: 48px; padding-left: 9px; line-height: 41px; }
.clock { width: 61px; text-align: center; line-height: 17px; padding-top: 4px; white-space: nowrap; letter-spacing: -.15px; }
```
FILE: app.js
```js
const states = [
  ["New York", 303], ["California", 331], ["Washington", 399], ["Illinois", 411], ["Texas", 417.5], ["Florida", 454],
  ["Michigan", 498], ["Oregon", 506], ["Massachusetts", 507], ["Minnesota", 517], ["North Carolina", 518], ["Georgia", 519],
  ["Alabama", 524.5], ["Virginia", 526], ["Wisconsin", 527], ["Indiana", 530], ["Pennsylvania", 530.3], ["Arizona", 532],
  ["Ohio", 532], ["Colorado", 537.5], ["New Jersey", 541], ["Kansas", 542.5], ["District of Columbia", 543], ["Idaho", 547],
  ["Arkansas", 548.7], ["Iowa", 549.3], ["Utah", 550.3], ["Louisiana", 550.3], ["Missouri", 551.5], ["Tennessee", 552],
  ["Oklahoma", 554.5], ["New Mexico", 558.3], ["Kentucky", 558.3], ["Maine", 559.5], ["Maryland", 560.5], ["South Dakota", 563.5],
  ["Vermont", 564], ["South Carolina", 565], ["Mississippi", 567], ["Rhode Island", 567.5], ["Connecticut", 568.3],
  ["Montana", 568.3], ["Wyoming", 569], ["Nebraska", 571.8], ["New Hampshire", 572], ["West Virginia", 574],
  ["Nevada", 574.5], ["North Dakota", 575.2], ["Delaware", 576.2]
];
const base = 577.3;
let out = '<path d="M64.500 252v407.500H945.500V252" fill="none" stroke="#e6e6e6"/>';
for (let k = 0; k <= 8; k++) {
  const y = base - k * 34.53;
  out += `<path d="M114 ${Math.round(y) + 0.5}H943" stroke="#dcdcdc" stroke-dasharray="1 3"/>`;
  out += `<text class="ax" x="108.500" y="${y + 2.7}" text-anchor="end">${k * 50}K</text>`;
}
states.forEach(([name, top], i) => {
  const x = 121.9 + i * 16.695;
  out += `<rect x="${x}" y="${top}" width="13.200" height="${base - top}" fill="#e66c37"/>`;
  out += `<text class="ax" x="0" y="0" text-anchor="end" transform="translate(${x + 3.2} 588) rotate(-35)">${name}</text>`;
});
out += '<text x="353.500" y="265" font-size="12.500" fill="#252423" textLength="305">Sales by State or Province and Product Category</text>';
out += '<text x="416" y="288" font-size="11.500" font-weight="600" fill="#555" textLength="99">Product Category</text>';
out += '<circle cx="524.500" cy="283.500" r="3.700" fill="#e66c37"/>';
out += '<text x="530" y="288" font-size="11.500" fill="#555" textLength="62">Technology</text>';
out += '<text x="488" y="655" font-size="10" fill="#252423" textLength="83">State or Province</text>';
out += '<text transform="translate(78 452) rotate(-90)" font-size="10" fill="#252423" textLength="26">Sales</text>';
document.getElementById("chart").innerHTML = out;

const sigma = '<svg viewBox="0 0 14 14"><path d="M11.500 4.500V2.500H3.500l4 4.500-4 4.500h8v-2" fill="none" stroke="#252423" stroke-width="1.300"/></svg>';
const cal = '<svg viewBox="0 0 14 14"><path d="M1.500 2.500h11v11h-11zM1 5.500h12M4 .5v2M10 .5v2" fill="none" stroke="#252423"/><path d="M3 8h8M3 11h8" stroke="#252423" stroke-width="2" stroke-dasharray="2 1"/></svg>';
const chev = '<svg viewBox="0 0 14 14"><path d="M0 4l5.500 6L11 4" fill="none" stroke="#2f7dab"/></svg>';
const rows = ["City", "Customer ID*", "Customer ...", "Customer S...", "Discount*", "Order Date#", "Order ID", "Order Priority",
  "Postal Code*", "Product Bas...*", "Product Cat...", "Product Co...", "Product Na...", "Product Su...", "Profit*",
  "Quantity or...*", "Region"];
document.getElementById("fieldrows").innerHTML = rows.map(r => {
  const s = r.endsWith("*"), d = r.endsWith("#");
  return `<div class="row"><span>${d ? chev : ""}</span><i class="cb"></i><span>${s ? sigma : d ? cal : ""}</span><span>${r.replace(/[*#]$/, "")}</span></div>`;
}).join("");
```
